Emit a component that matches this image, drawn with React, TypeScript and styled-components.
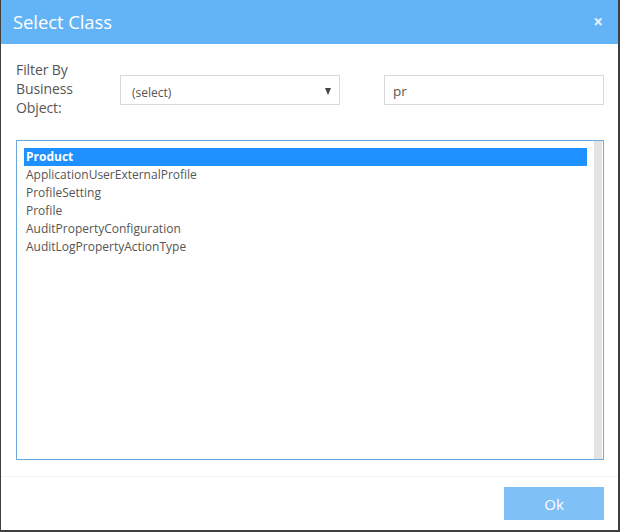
import * as React from "react";
import styled, { createGlobalStyle } from "styled-components";

const GlobalStyle = createGlobalStyle`
  html, body {
    margin: 0;
    padding: 0;
    background: #ffffff;
  }
  * {
    box-sizing: border-box;
  }
`;

const Dialog = styled.div`
  width: 620px;
  height: 532px;
  display: flex;
  flex-direction: column;
  background: #ffffff;
  border-left: 1px solid #3f3f3f;
  border-right: 2px solid #3f3f3f;
  border-bottom: 2px solid #3f3f3f;
  font-family: "Open Sans", "Noto Sans", sans-serif;
  color: #555555;
`;

const TitleBar = styled.div`
  height: 44px;
  flex: none;
  display: flex;
  align-items: center;
  justify-content: space-between;
  padding: 0 15px 2px 12px;
  background: #63b4f6;
  color: #ffffff;
`;

const Title = styled.h1`
  margin: 0;
  font-size: 18.5px;
  font-weight: 400;
  letter-spacing: -0.1px;
`;

const CloseButton = styled.button`
  border: none;
  background: none;
  padding: 0;
  color: #e3f1fd;
  font-family: inherit;
  font-size: 17px;
  font-weight: 700;
  line-height: 1;
  cursor: pointer;
`;

const Body = styled.div`
  flex: none;
  display: flex;
  flex-direction: column;
  padding: 16px 14px 16px 15px;
`;

const FilterRow = styled.div`
  display: grid;
  grid-template-columns: 104px 220px 1fr;
  align-items: start;
`;

const Label = styled.label`
  font-size: 14px;
  line-height: 19px;
  letter-spacing: -0.1px;
  color: #555555;
`;

type FieldProps = { $indent: number; $drop: number; $size?: number };

const Field = styled.div<FieldProps>`
  margin-top: 15px;
  height: 30px;
  width: 220px;
  justify-self: end;
  border: 1px solid #d9d9d9;
  background: #ffffff;
  display: flex;
  align-items: center;
  justify-content: space-between;
  padding: ${(p) => p.$drop}px 8px 0 ${(p) => p.$indent}px;
  font-size: ${(p) => p.$size ?? 12}px;
  color: #555555;
`;

const Caret = styled.span`
  width: 0;
  height: 0;
  border-left: 3px solid transparent;
  border-right: 3px solid transparent;
  border-top: 7px solid #444444;
  margin-top: -3px;
`;

const ListBox = styled.div`
  margin-top: 23px;
  height: 320px;
  border: 1px solid #6ba8dc;
  display: flex;
  padding: 7px 1px 0 7px;
`;

const Items = styled.ul`
  flex: 1;
  margin: 0;
  padding: 0;
  list-style: none;
`;

const Item = styled.li<{ $selected?: boolean }>`
  height: 18px;
  line-height: 17px;
  padding-left: 2px;
  margin-right: 7px;
  font-size: 12px;
  font-weight: ${(p) => (p.$selected ? 700 : 400)};
  background: ${(p) => (p.$selected ? "#1e90ff" : "transparent")};
  color: ${(p) => (p.$selected ? "#ffffff" : "#555555")};
`;

const ScrollTrack = styled.div`
  width: 8px;
  margin-top: -7px;
  background: #e3e3e3;
`;

const Footer = styled.div`
  flex: 1;
  border-top: 1px solid #f2f2f2;
  display: flex;
  align-items: center;
  justify-content: flex-end;
  padding: 0 14px 0 0;
`;

const OkButton = styled.button`
  width: 100px;
  height: 33px;
  border: none;
  background: #7fc0f7;
  color: #ffffff;
  font-family: "Open Sans", "Noto Sans", sans-serif;
  font-size: 15px;
  cursor: pointer;
`;

const classes = [
  "Product",
  "ApplicationUserExternalProfile",
  "ProfileSetting",
  "Profile",
  "AuditPropertyConfiguration",
  "AuditLogPropertyActionType",
];

export default function App() {
  return (
    <>
      <GlobalStyle />
      <Dialog>
        <TitleBar>
          <Title>Select Class</Title>
          <CloseButton aria-label="close">×</CloseButton>
        </TitleBar>
        <Body>
          <FilterRow>
            <Label>
              Filter By
              <br />
              Business
              <br />
              Object:
            </Label>
            <Field $indent={11} $drop={5}>
              <span>(select)</span>
              <Caret />
            </Field>
            <Field $indent={8} $drop={2} $size={13.5}>
              pr
            </Field>
          </FilterRow>
          <ListBox>
            <Items>
              {classes.map((c, i) => (
                <Item key={c} $selected={i === 0}>
                  {c}
                </Item>
              ))}
            </Items>
            <ScrollTrack />
          </ListBox>
        </Body>
        <Footer>
          <OkButton>Ok</OkButton>
        </Footer>
      </Dialog>
    </>
  );
}
